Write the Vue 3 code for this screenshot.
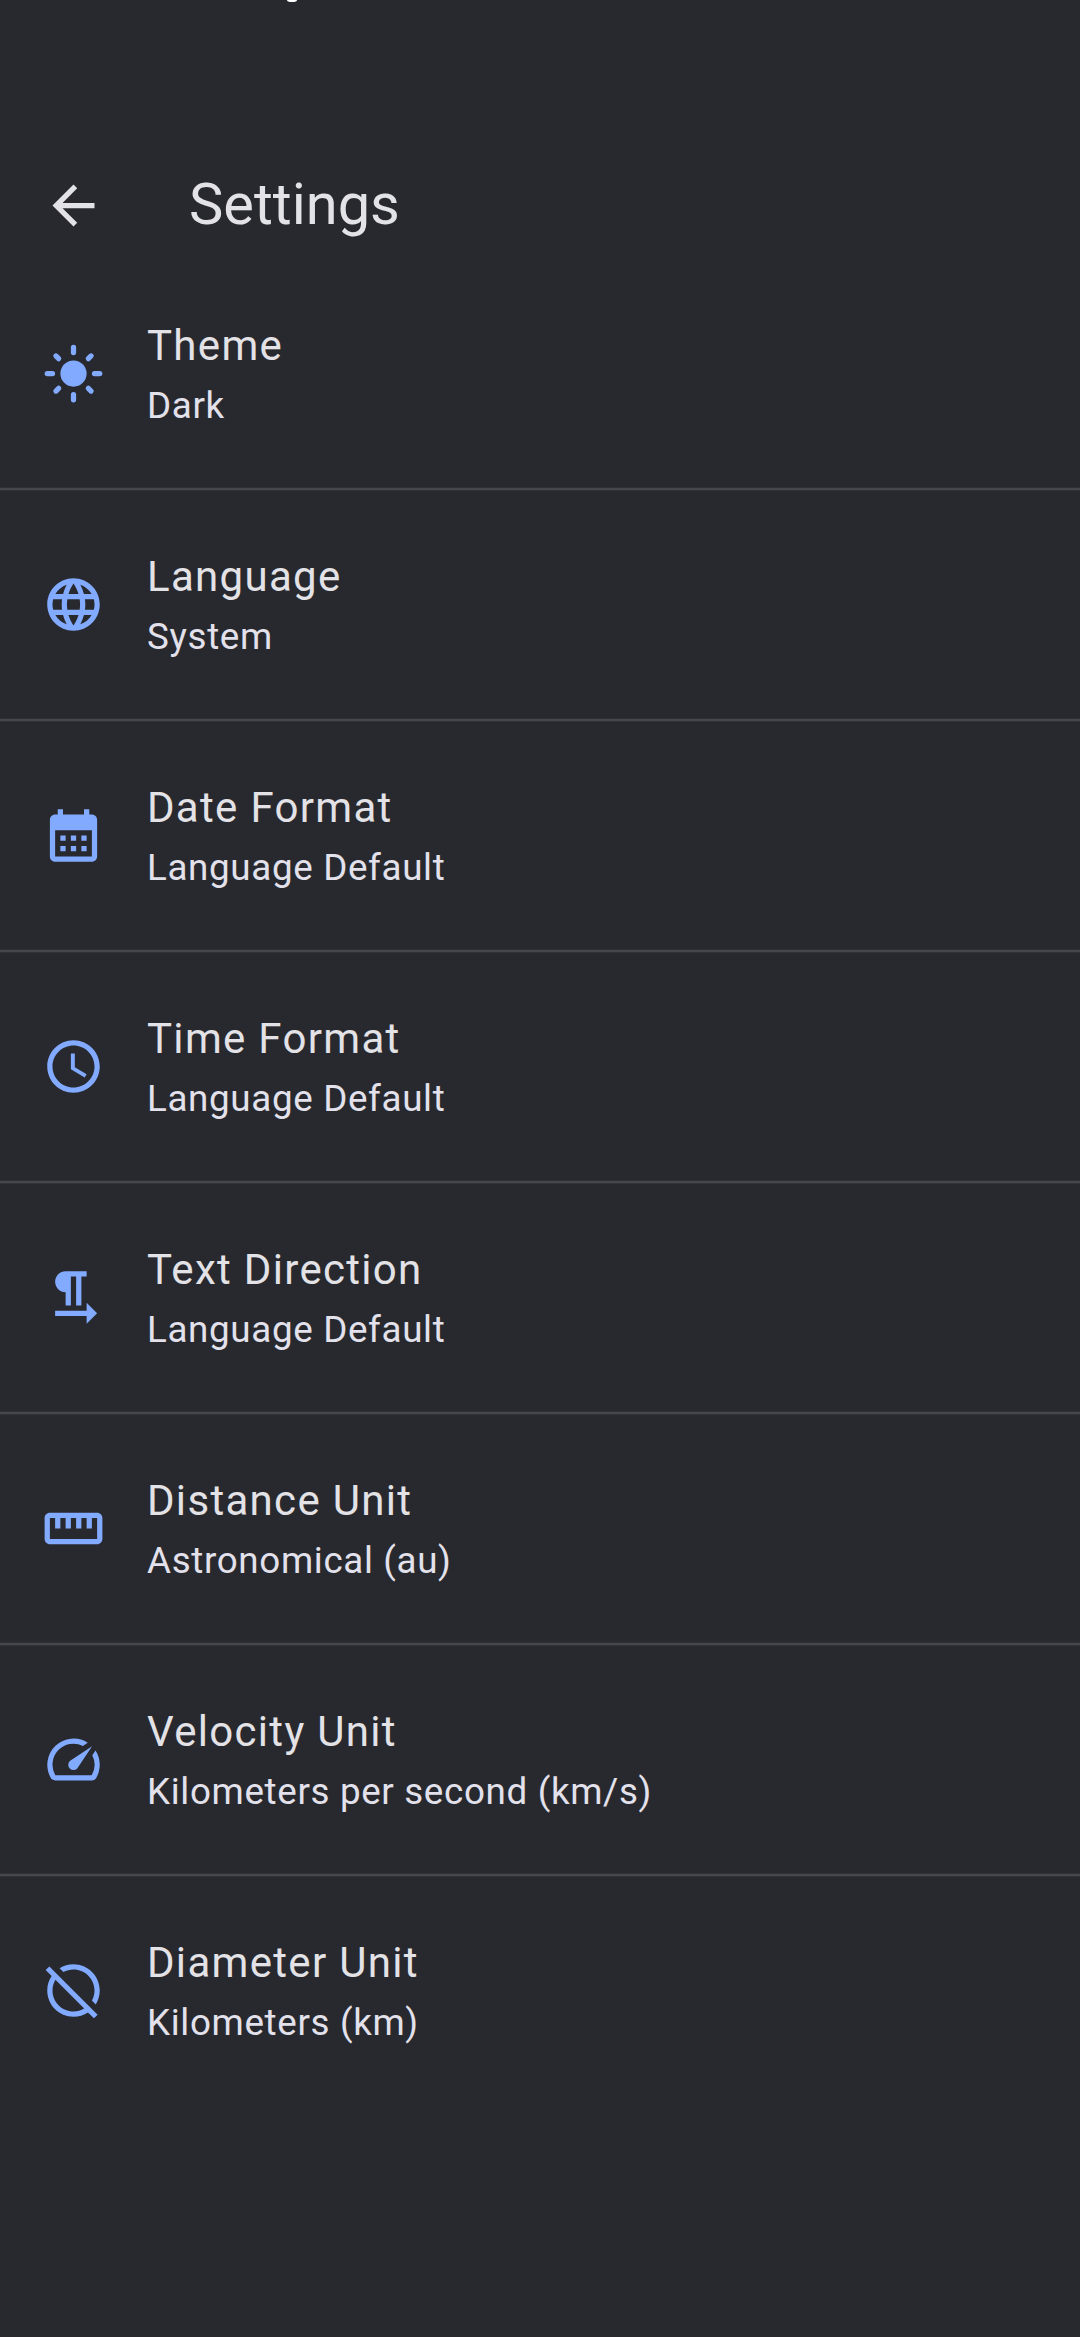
<script setup>
const rows = [
  { title: 'Theme', value: 'Dark', icon: 'sun' },
  { title: 'Language', value: 'System', icon: 'globe' },
  { title: 'Date Format', value: 'Language Default', icon: 'calendar' },
  { title: 'Time Format', value: 'Language Default', icon: 'clock' },
  { title: 'Text Direction', value: 'Language Default', icon: 'direction' },
  { title: 'Distance Unit', value: 'Astronomical (au)', icon: 'ruler' },
  { title: 'Velocity Unit', value: 'Kilometers per second (km/s)', icon: 'speed' },
  { title: 'Diameter Unit', value: 'Kilometers (km)', icon: 'diameter' },
]
</script>

<template>
  <div class="screen">
    <div class="status"><span class="descender"></span></div>
    <header class="bar">
      <svg class="back" viewBox="0 0 24 24"><path d="M20 11H7.83l5.59-5.59L12 4l-8 8 8 8 1.41-1.41L7.83 13H20v-2z" /></svg>
      <h1>Settings</h1>
    </header>
    <main class="list">
      <section v-for="row in rows" :key="row.title" class="item">
        <div class="row">
          <svg class="icon" viewBox="0 0 24 24">
            <g v-if="row.icon === 'sun'">
              <circle cx="12" cy="12" r="5" />
              <path class="ray" d="M12 2v2M12 20v2M2 12h2M20 12h2M5.3 5.3l1.05 1.05M17.65 17.65l1.05 1.05M5.3 18.7l1.05-1.05M17.65 6.35l1.05-1.05" />
            </g>
            <path v-else-if="row.icon === 'globe'" d="M11.99 2C6.47 2 2 6.48 2 12s4.47 10 9.99 10C17.52 22 22 17.52 22 12S17.52 2 11.99 2zm6.93 6h-2.95c-.32-1.25-.78-2.45-1.38-3.56 1.84.63 3.37 1.91 4.33 3.56zM12 4.04c.83 1.2 1.48 2.53 1.91 3.96h-3.82c.43-1.43 1.08-2.76 1.91-3.96zM4.26 14C4.1 13.36 4 12.69 4 12s.1-1.36.26-2h3.38c-.08.66-.14 1.32-.14 2s.06 1.34.14 2H4.26zm.82 2h2.95c.32 1.25.78 2.45 1.38 3.56-1.84-.63-3.37-1.9-4.33-3.56zm2.95-8H5.08c.96-1.66 2.49-2.93 4.33-3.56C8.81 5.55 8.35 6.75 8.03 8zM12 19.96c-.83-1.2-1.48-2.53-1.91-3.96h3.82c-.43 1.43-1.08 2.76-1.91 3.96zM14.34 14H9.66c-.09-.66-.16-1.32-.16-2s.07-1.35.16-2h4.68c.09.65.16 1.32.16 2s-.07 1.34-.16 2zm.25 5.56c.6-1.11 1.06-2.31 1.38-3.56h2.95c-.96 1.65-2.49 2.93-4.33 3.56zM16.36 14c.08-.66.14-1.32.14-2s-.06-1.34-.14-2h3.38c.16.64.26 1.31.26 2s-.1 1.36-.26 2h-3.38z" />
            <path v-else-if="row.icon === 'calendar'" d="M19 4h-1V2h-2v2H8V2H6v2H5c-1.11 0-1.99.9-1.99 2L3 20c0 1.1.89 2 2 2h14c1.1 0 2-.9 2-2V6c0-1.1-.9-2-2-2zm0 16H5V10h14v10zM9 14H7v-2h2v2zm4 0h-2v-2h2v2zm4 0h-2v-2h2v2zm-8 4H7v-2h2v2zm4 0h-2v-2h2v2zm4 0h-2v-2h2v2z" />
            <path v-else-if="row.icon === 'clock'" d="M11.99 2C6.47 2 2 6.48 2 12s4.47 10 9.99 10C17.52 22 22 17.52 22 12S17.52 2 11.99 2zM12 20c-4.42 0-8-3.58-8-8s3.58-8 8-8 8 3.58 8 8-3.58 8-8 8zm.5-13H11v6l5.25 3.15.75-1.23-4.5-2.67z" />
            <path v-else-if="row.icon === 'direction'" d="M9 10v5h2V4h2v11h2V4h2V2H9C6.79 2 5 3.79 5 6s1.79 4 4 4zm12 8l-4-4v3H5v2h12v3l4-4z" />
            <path v-else-if="row.icon === 'ruler'" d="M21 6H3c-1.1 0-2 .9-2 2v8c0 1.1.9 2 2 2h18c1.1 0 2-.9 2-2V8c0-1.1-.9-2-2-2zm0 10H3V8h2v4h2V8h2v4h2V8h2v4h2V8h2v4h2V8h2v8z" />
            <path v-else-if="row.icon === 'speed'" d="M20.38 8.57l-1.23 1.85a8 8 0 0 1-.22 7.58H5.07A8 8 0 0 1 15.58 6.85l1.85-1.23A10 10 0 0 0 3.35 19a2 2 0 0 0 1.72 1h13.85a2 2 0 0 0 1.74-1 10 10 0 0 0-.27-10.44zm-9.79 6.84a2 2 0 0 0 2.83 0l5.66-8.49-8.49 5.66a2 2 0 0 0 0 2.83z" />
            <path v-else d="M22 12c0 1.94-.56 3.76-1.52 5.3l-1.46-1.46c.62-1.15.98-2.45.98-3.84 0-4.41-3.59-8-8-8-1.39 0-2.69.36-3.84.98L6.7 3.52C8.24 2.56 10.06 2 12 2c5.52 0 10 4.48 10 10zM2.81 2.81 1.39 4.22l2.27 2.27C2.61 8.07 2 9.96 2 12c0 5.52 4.48 10 10 10 2.04 0 3.93-.61 5.51-1.66l2.27 2.27 1.41-1.41L2.81 2.81zM12 20c-4.41 0-8-3.59-8-8 0-1.48.41-2.86 1.12-4.06l10.94 10.94C14.86 19.59 13.48 20 12 20z" />
          </svg>
          <div class="text">
            <div class="title">{{ row.title }}</div>
            <div class="value">{{ row.value }}</div>
          </div>
        </div>
        <div class="divider"></div>
      </section>
    </main>
  </div>
</template>

<style>
body {
  background: #28292e;
}
</style>

<style scoped>
.screen {
  height: 2337px;
  overflow: hidden;
  background: #28292e;
  font-family: Roboto, sans-serif;
  color: #e3e2e6;
}
.status {
  height: 151px;
  padding-left: 287px;
  box-sizing: border-box;
  overflow: hidden;
}
.descender {
  display: block;
  width: 10px;
  height: 2px;
  background: #fff;
  border-radius: 0 0 5px 5px / 0 0 2px 2px;
}
.bar {
  display: flex;
  align-items: center;
  height: 109px;
  padding: 0 42px;
  box-sizing: border-box;
}
.back {
  width: 63px;
  height: 63px;
  fill: #e3e2e6;
}
h1 {
  margin: 0 0 0 84px;
  padding-bottom: 3px;
  font-size: 57.75px;
  font-weight: 400;
  line-height: 74px;
}
.row {
  display: flex;
  align-items: center;
  height: 227px;
  padding: 0 42px;
  box-sizing: border-box;
}
.divider {
  height: 4px;
  background: linear-gradient(#2f3036 1px, #46464f 1px, #46464f 3px, #313238 3px);
}
.item:last-child .divider {
  background: none;
}
.icon {
  width: 63px;
  height: 63px;
  fill: #82aaff;
}
.ray {
  stroke: #82aaff;
  stroke-width: 2;
  stroke-linecap: round;
}
.text {
  margin-left: 42px;
}
.title {
  font-size: 42px;
  line-height: 64px;
  letter-spacing: 1.31px;
}
.value {
  font-size: 36.75px;
  line-height: 56px;
  letter-spacing: 0.66px;
  color: #e2e1ec;
}
</style>
